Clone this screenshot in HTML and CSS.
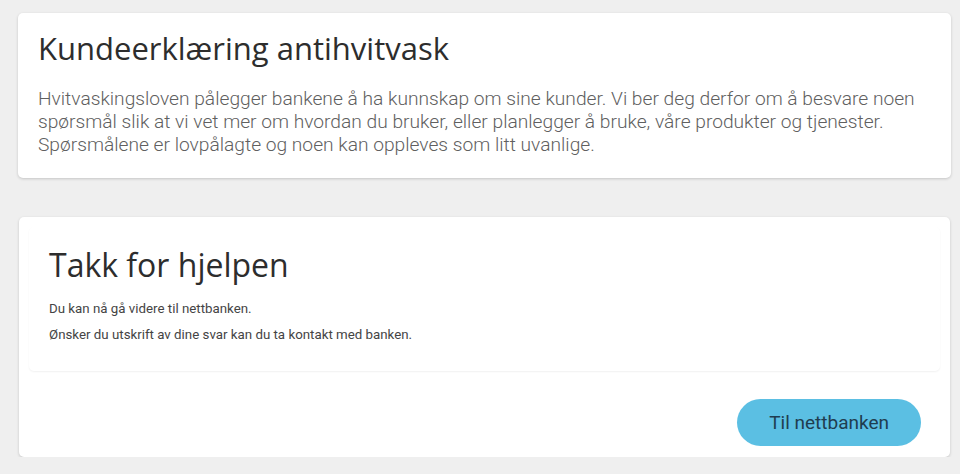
FILE: index.html
```html
<!DOCTYPE html>
<html lang="no">
<head>
  <meta charset="UTF-8" />
  <meta name="viewport" content="width=device-width, initial-scale=1.0"/>
  <title>Kundeerklæring antihvitvask</title>
  <link rel="stylesheet" href="styles.css">
</head>
<body>

  <section class="card intro">
    <h1>Kundeerklæring antihvitvask</h1>
    <p>Hvitvaskingsloven pålegger bankene å ha kunnskap om sine kunder. Vi ber deg derfor om å besvare noen spørsmål slik at vi vet mer om hvordan du bruker, eller planlegger å bruke, våre produkter og tjenester. Spørsmålene er lovpålagte og noen kan oppleves som litt uvanlige.</p>
  </section>

  <section class="card done">
    <div class="done-body">
      <h2>Takk for hjelpen</h2>
      <p>Du kan nå gå videre til nettbanken.</p>
      <p>Ønsker du utskrift av dine svar kan du ta kontakt med banken.</p>
    </div>
    <div class="done-footer">
      <a href="#" class="bank-button">Til nettbanken</a>
    </div>
  </section>

</body>
</html>
```

FILE: styles.css
```css
body {
  font-family: 'Roboto', 'Liberation Sans', sans-serif;
  background: #efefef;
  color: #333;
  margin: 0;
  padding: 13px 9px 0 18px;
}

.card {
  background: white;
  border-radius: 5px;
  box-shadow: 0 1px 3px rgba(0, 0, 0, 0.18);
}

.intro {
  padding: 14px 20px 22px;
  margin-bottom: 39px;
}

h1, h2 {
  font-family: 'Open Sans', sans-serif;
  font-weight: 400;
  color: #2d2d2d;
  margin: 0;
}

h1 {
  font-size: 31px;
  line-height: 42px;
  margin-bottom: 18px;
}

.intro p {
  font-weight: 300;
  font-size: 19.2px;
  line-height: 23px;
  color: #606060;
  margin: 0;
}

.done {
  margin-left: 1px;
  margin-right: 1px;
  padding: 10px 10px 11px;
}

.done-body {
  padding: 16px 20px 28px;
  border-radius: 5px;
  box-shadow: 0 1px 2px rgba(0, 0, 0, 0.06);
}

h2 {
  font-size: 32px;
  line-height: 44px;
  margin-bottom: 14px;
}

.done-body p {
  font-size: 13.3px;
  line-height: 16px;
  color: #444;
  margin: 0 0 10px;
}

.done-body p:last-child {
  margin-bottom: 0;
}

.done-footer {
  display: flex;
  justify-content: flex-end;
  padding: 28px 19px 0 0;
}

.bank-button {
  display: inline-block;
  padding: 0 32px;
  height: 47px;
  line-height: 47px;
  background-color: #5bbfe3;
  color: #1f3d50;
  text-decoration: none;
  font-size: 19px;
  border-radius: 24px;
}
```
